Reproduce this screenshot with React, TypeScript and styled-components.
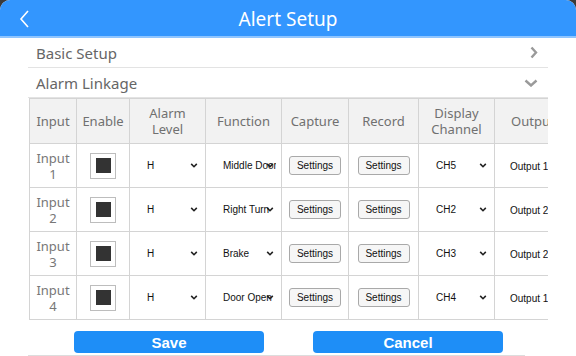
import React from "react";
import styled, { createGlobalStyle } from "styled-components";

const GlobalStyle = createGlobalStyle`
  html, body {
    margin: 0;
    padding: 0;
    background: #3b3b3b;
  }
  * {
    box-sizing: border-box;
  }
`;

const Page = styled.div`
  width: 576px;
  height: 356px;
  background: #ffffff;
  border-radius: 10px 10px 0 0;
  overflow: hidden;
  font-family: "Noto Sans", "Open Sans", sans-serif;
`;

const Header = styled.header`
  position: relative;
  height: 38px;
  background: #3396fe;
  border-bottom: 2px solid #8fc5ff;
  display: flex;
  align-items: center;
  justify-content: center;
  color: #ffffff;
  font-size: 19px;
  padding-top: 1px;
`;

const BackButton = styled.span`
  position: absolute;
  left: 17px;
  top: 9px;
  display: flex;
`;

const Content = styled.div`
  padding: 0 28px 0 29px;
`;

const SectionRow = styled.div`
  height: 30px;
  display: flex;
  align-items: center;
  justify-content: space-between;
  padding: 0 10px 0 8px;
  border-bottom: 1px solid #e3e3e3;
  color: #666666;
  font-size: 15px;
  margin-left: -1px;
`;

const TableWrap = styled.div`
  width: 519px;
  overflow: hidden;
`;

const Table = styled.table`
  border-collapse: collapse;
  table-layout: fixed;
  width: 580px;
`;

const Th = styled.th<{ $w: number; $align?: string }>`
  width: ${(p) => p.$w}px;
  height: 45px;
  background: #f2f2f2;
  border: 1px solid #d4d4d4;
  color: #707070;
  font-weight: normal;
  font-size: 13px;
  line-height: 16px;
  padding: 0 2px 0 ${(p) => (p.$align === "left" ? 16 : 2)}px;
  text-align: ${(p) => p.$align || "center"};
`;

const Td = styled.td<{ $align?: string }>`
  height: 44px;
  border: 1px solid #d4d4d4;
  color: #777777;
  font-size: 13px;
  line-height: 16px;
  padding: 0;
  text-align: ${(p) => p.$align || "center"};
`;

const CheckBox = styled.span`
  display: inline-flex;
  width: 26px;
  height: 26px;
  border: 1px solid #bdbdbd;
  align-items: center;
  justify-content: center;
  vertical-align: middle;
  &::after {
    content: "";
    width: 15px;
    height: 15px;
    background: #333333;
  }
`;

const Select = styled.div`
  position: relative;
  margin-left: 14px;
  width: 56px;
  padding-left: 3px;
  font-family: "Liberation Sans", Arial, sans-serif;
  font-size: 10px;
  color: #111111;
  white-space: nowrap;
  overflow: hidden;
  line-height: 14px;
`;

const Arrow = styled.span`
  position: absolute;
  right: 2px;
  top: 4px;
  display: flex;
`;

const SettingsButton = styled.button`
  width: 52px;
  height: 19px;
  padding: 0;
  border: 1px solid #a9a9a9;
  border-radius: 3px;
  background: #f6f6f6;
  font-family: "Liberation Sans", Arial, sans-serif;
  font-size: 10px;
  color: #111111;
`;

const OutputText = styled.span`
  padding-left: 15px;
  font-family: "Liberation Sans", Arial, sans-serif;
  font-size: 10px;
  color: #111111;
  white-space: nowrap;
`;

const Footer = styled.div`
  width: 497px;
  height: 36px;
  border-bottom: 1px solid #dddddd;
  margin-left: -1px;
  display: flex;
  align-items: flex-end;
  padding: 0 0 2px 46px;
  gap: 49px;
`;

const ActionButton = styled.button`
  width: 190px;
  height: 22px;
  border: none;
  border-radius: 4px;
  background: #1e8ef7;
  color: #ffffff;
  font-family: "Liberation Sans", Arial, sans-serif;
  font-weight: bold;
  font-size: 15px;
  padding: 0;
`;

const Chevron = () => (
  <svg width="8" height="5" viewBox="0 0 10 6">
    <polyline points="1.5,1 5,4.5 8.5,1" fill="none" stroke="#222" strokeWidth="2" />
  </svg>
);

const rows = [
  { fn: "Middle Door", ch: "CH5", out: "Output 1" },
  { fn: "Right Turn", ch: "CH2", out: "Output 2" },
  { fn: "Brake", ch: "CH3", out: "Output 2" },
  { fn: "Door Open", ch: "CH4", out: "Output 1" },
];

const DropDown = ({ value }: { value: string }) => (
  <Select>
    {value}
    <Arrow>
      <Chevron />
    </Arrow>
  </Select>
);

export default function App() {
  return (
    <>
      <GlobalStyle />
      <Page>
        <Header>
          <BackButton>
            <svg width="14" height="20" viewBox="0 0 14 20">
              <polyline points="11,2 4,10 11,18" fill="none" stroke="#fff" strokeWidth="1.6" />
            </svg>
          </BackButton>
          Alert Setup
        </Header>
        <Content>
          <SectionRow>
            Basic Setup
            <svg width="8" height="13" viewBox="0 0 8 13">
              <polyline points="1.5,1.5 6,6.5 1.5,11.5" fill="none" stroke="#9a9a9a" strokeWidth="2.4" />
            </svg>
          </SectionRow>
          <SectionRow>
            Alarm Linkage
            <svg width="14" height="8" viewBox="0 0 14 8">
              <polyline points="1.5,1.5 7,6.5 12.5,1.5" fill="none" stroke="#9a9a9a" strokeWidth="2.4" />
            </svg>
          </SectionRow>
          <TableWrap>
            <Table>
              <thead>
                <tr>
                  <Th $w={47}>Input</Th>
                  <Th $w={53}>Enable</Th>
                  <Th $w={76}>Alarm Level</Th>
                  <Th $w={76}>Function</Th>
                  <Th $w={67}>Capture</Th>
                  <Th $w={70}>Record</Th>
                  <Th $w={76}>
                    Display
                    <br />
                    Channel
                  </Th>
                  <Th $w={115} $align="left">
                    Output
                  </Th>
                </tr>
              </thead>
              <tbody>
                {rows.map((r, i) => (
                  <tr key={i}>
                    <Td>
                      Input
                      <br />
                      {i + 1}
                    </Td>
                    <Td>
                      <CheckBox />
                    </Td>
                    <Td $align="left">
                      <DropDown value="H" />
                    </Td>
                    <Td $align="left">
                      <DropDown value={r.fn} />
                    </Td>
                    <Td>
                      <SettingsButton>Settings</SettingsButton>
                    </Td>
                    <Td>
                      <SettingsButton>Settings</SettingsButton>
                    </Td>
                    <Td $align="left">
                      <DropDown value={r.ch} />
                    </Td>
                    <Td $align="left">
                      <OutputText>{r.out}</OutputText>
                    </Td>
                  </tr>
                ))}
              </tbody>
            </Table>
          </TableWrap>
          <Footer>
            <ActionButton>Save</ActionButton>
            <ActionButton>Cancel</ActionButton>
          </Footer>
        </Content>
      </Page>
    </>
  );
}
